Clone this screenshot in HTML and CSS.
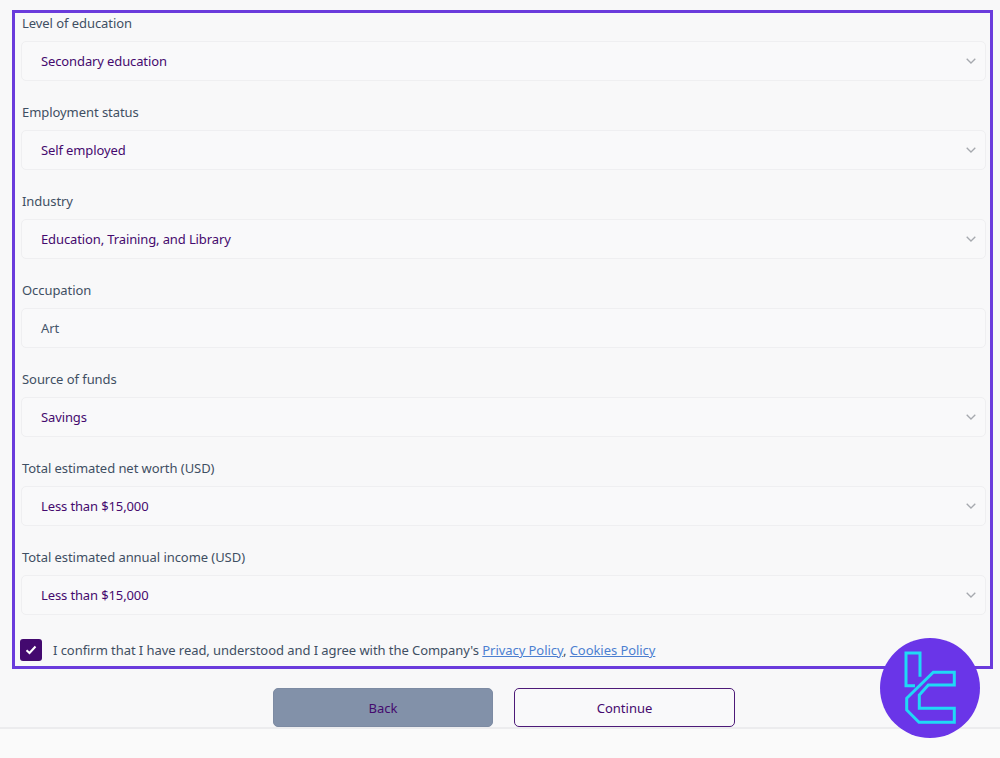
FILE: index.html
```html
<!DOCTYPE html>
<html lang="en">
<head>
<meta charset="utf-8">
<title>Employment details</title>
<link rel="stylesheet" href="styles.css">
</head>
<body>
<main class="page">
  <form class="frame">
    <div class="field"><div class="label">Level of education</div><div class="box select"><span>Secondary education</span><svg class="chev" viewBox="0 0 10 6"><path d="M.7.7 5 5 9.3.7"/></svg></div></div>
    <div class="field"><div class="label">Employment status</div><div class="box select"><span>Self employed</span><svg class="chev" viewBox="0 0 10 6"><path d="M.7.7 5 5 9.3.7"/></svg></div></div>
    <div class="field"><div class="label">Industry</div><div class="box select"><span>Education, Training, and Library</span><svg class="chev" viewBox="0 0 10 6"><path d="M.7.7 5 5 9.3.7"/></svg></div></div>
    <div class="field"><div class="label">Occupation</div><div class="box input"><span>Art</span></div></div>
    <div class="field"><div class="label">Source of funds</div><div class="box select"><span>Savings</span><svg class="chev" viewBox="0 0 10 6"><path d="M.7.7 5 5 9.3.7"/></svg></div></div>
    <div class="field"><div class="label">Total estimated net worth (USD)</div><div class="box select"><span>Less than $15,000</span><svg class="chev" viewBox="0 0 10 6"><path d="M.7.7 5 5 9.3.7"/></svg></div></div>
    <div class="field"><div class="label">Total estimated annual income (USD)</div><div class="box select"><span>Less than $15,000</span><svg class="chev" viewBox="0 0 10 6"><path d="M.7.7 5 5 9.3.7"/></svg></div></div>
    <div class="confirm">
      <span class="check"><svg viewBox="0 0 12 10"><path d="M1.500 5.200 4.500 8 10.500 1.500"/></svg></span>
      <span>I confirm that I have read, understood and I agree with the Company's <a href="#">Privacy Policy</a>, <a href="#">Cookies Policy</a></span>
    </div>
  </form>
  <div class="actions">
    <button type="button" class="btn back">Back</button>
    <button type="button" class="btn next">Continue</button>
  </div>
</main>
<footer class="foot"></footer>
<svg class="logo" viewBox="0 0 100 100" aria-label="logo">
  <circle cx="50" cy="50" r="50" fill="#6a35e8"/>
  <path class="logo-line" d="M35 47.700H26V15H40V38.700M26.700 60.300 53.300 34.300H74.300V47H48.300L39.300 57V70.300H74.300V84.300H39L26.700 72Z"/>
</svg>
</body>
</html>
```
FILE: styles.css
```css
* { box-sizing: border-box; }
html, body { margin: 0; height: 100%; }
body {
  position: relative;
  width: 1000px;
  height: 758px;
  overflow: hidden;
  background: #f8f8f9;
  font-family: "Noto Sans", sans-serif;
  font-size: 13px;
  letter-spacing: -0.06px;
  color: #3f4f63;
}
.page { padding-top: 10px; height: 729px; border-bottom: 2px solid #ececee; }
.frame {
  width: 981px;
  height: 659px;
  margin-left: 12px;
  padding: 0 4px 0 6px;
  border: 3px solid #6a3bdc;
  display: flex;
  flex-direction: column;
}
.field { margin-bottom: 21px; }
.label { height: 20px; line-height: 20px; margin-bottom: 8px; padding-left: 1px; }
.box {
  height: 40px;
  border: 1px solid #efeff1;
  border-radius: 5px;
  background: #f9f9fa;
  padding: 0 9px 0 19px;
  display: flex;
  align-items: center;
  justify-content: space-between;
  line-height: 20px;
}
.select { color: #450a6e; letter-spacing: -0.12px; }
.input { color: #46566a; }
.chev { width: 10px; height: 6px; fill: none; stroke: #a6a9ae; stroke-width: 1.3; }
.confirm {
  display: flex;
  align-items: center;
  gap: 11px;
  height: 22px;
  margin-top: 3px;
  margin-left: -1px;
  white-space: nowrap;
}
.check {
  width: 22px;
  height: 22px;
  border-radius: 3px;
  background: #43096f;
  display: flex;
  align-items: center;
  justify-content: center;
}
.check svg { width: 12px; height: 10px; fill: none; stroke: #fff; stroke-width: 2; }
.confirm a { color: #4c7fd1; text-decoration: underline; }
.actions { display: flex; justify-content: center; gap: 21px; margin-top: 19px; padding-left: 8px; }
.btn {
  width: 220px;
  height: 39px;
  border-radius: 5px;
  font: 13px/20px "Noto Sans", sans-serif;
  color: #450a6e;
}
.back { background: #8291a9; border: 1px solid #7d8ba3; }
.next { background: #f9f9fa; border: 1px solid #4d1a78; width: 221px; }
.foot { height: 29px; background: #fafafa; }
.logo { position: absolute; left: 880px; top: 638px; width: 100px; height: 100px; }
.logo-line { fill: none; stroke: #1fd9f6; stroke-width: 3; }
```
